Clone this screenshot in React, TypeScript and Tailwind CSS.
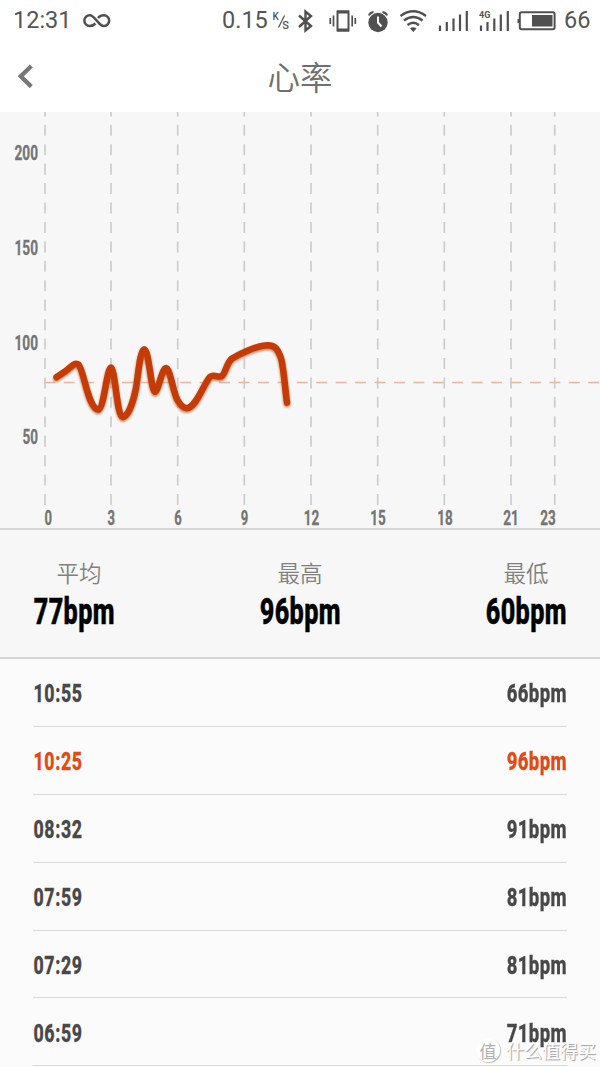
import React from "react";

const axisX = [45, 111, 177.7, 244.3, 311, 377.7, 444.3, 511, 554.7];

const xLabels = [
  { text: "0", x: 48.3, w: 7.5 },
  { text: "3", x: 111.2, w: 7.5 },
  { text: "6", x: 178, w: 7.5 },
  { text: "9", x: 244.5, w: 7.5 },
  { text: "12", x: 311.5, w: 15.5 },
  { text: "15", x: 378, w: 15.5 },
  { text: "18", x: 445, w: 15.5 },
  { text: "21", x: 511, w: 15.5 },
  { text: "23", x: 548, w: 15.5 },
];

const yLabels = [
  { text: "200", y: 159.5, w: 23.5 },
  { text: "150", y: 254.5, w: 23.5 },
  { text: "100", y: 349.5, w: 23.5 },
  { text: "50", y: 444.2, w: 15.5 },
];

const rows = [
  { time: "10:55", bpm: "66bpm", peak: false },
  { time: "10:25", bpm: "96bpm", peak: true },
  { time: "08:32", bpm: "91bpm", peak: false },
  { time: "07:59", bpm: "81bpm", peak: false },
  { time: "07:29", bpm: "81bpm", peak: false },
  { time: "06:59", bpm: "71bpm", peak: false },
];

function StatusBar() {
  return (
    <div className="flex h-[42px] shrink-0 items-center pl-[13px] font-['Roboto',sans-serif] text-[23.5px] font-normal text-[#555]">
      <span className="w-[70px]">12:31</span>
      <svg className="h-[42px] w-[28px]" viewBox="83 0 28 42" fill="none" stroke="#505050" strokeWidth="2.5">
        <path d="M95.500 23.500C93.500 25.500 91.500 26 89.700 26A5.400 5.400 0 0 1 89.700 15.200C95 15.200 98.500 26 103.800 26A5.400 5.400 0 0 0 103.800 15.200C101.500 15.200 99.500 16.200 98 18" />
      </svg>
      <span className="ml-[111px] w-[51px]">0.15</span>
      <svg className="h-[42px] w-[17px]" viewBox="273 0 17 42" fill="#555">
        <text x="272.500" y="19.500" fontSize="10" fontWeight="500">K</text>
        <path d="M284.500 15.500L278.500 27.500" stroke="#555" strokeWidth="1.300" />
        <text x="282.300" y="29" fontSize="11" fontWeight="500">S</text>
      </svg>
      <svg className="ml-[8px] h-[42px] w-[16px]" viewBox="298 0 16 42" fill="none" stroke="#505050" strokeWidth="2.4">
        <path d="M299 15.500L311 26L305.500 30.500V11.500L311 16L299 27" />
      </svg>
      <svg className="ml-[14px] h-[42px] w-[30px]" viewBox="328 0 30 42" fill="none" stroke="#505050" strokeWidth="1.700">
        <path d="M337.500 11.500H348.500V30.500H337.500Z" strokeWidth="2" />
        <path d="M337 12H349M337 30H349" strokeWidth="3" />
        <path d="M333.500 15.500V26.500M330.300 18V24M352.200 15.500V26.500M355.300 18V24" />
      </svg>
      <svg className="ml-[9px] h-[42px] w-[23px]" viewBox="367 0 23 42" fill="none">
        <circle cx="378" cy="22.500" r="9.700" fill="#505050" />
        <path d="M369 15.500Q370 12.500 373.500 12M387 15.500Q386 12.500 382.500 12" stroke="#505050" strokeWidth="2" />
        <path d="M378 16.500V22.500L381.500 26.500" stroke="#fff" strokeWidth="2" />
      </svg>
      <svg className="ml-[9px] h-[42px] w-[28px]" viewBox="399 0 28 42" fill="none" stroke="#505050" strokeWidth="2.300">
        <path d="M400.500 16Q413.300 6.500 426 16M404 20.500Q413.300 13.500 422.500 20.500M407.500 25Q413.300 20.500 419 25" />
        <path d="M410 28.500Q413.300 26 416.500 28.500L413.300 32Z" fill="#505050" stroke="none" />
      </svg>
      <svg className="ml-[11px] h-[42px] w-[32px]" viewBox="438 0 32 42" stroke="#505050" strokeWidth="2.200">
        <path d="M440 31V25.500M446.800 31V22M453.500 31V18.500M460 31V14.500M466.800 31V11" />
      </svg>
      <svg className="ml-[8px] h-[42px] w-[33px]" viewBox="478 0 33 42" stroke="#505050" strokeWidth="2.200">
        <path d="M481 31V25.500M487.500 31V22M494.300 31V18.500M500.800 31V14.500M507.800 31V11" />
        <text x="479" y="18" fontSize="9" fontWeight="700" fill="#505050" stroke="none">4G</text>
      </svg>
      <svg className="ml-[6px] h-[42px] w-[40px]" viewBox="517 0 40 42" fill="none">
        <rect x="519.800" y="12.300" width="34.800" height="17" rx="1.800" stroke="#505050" strokeWidth="2" />
        <path d="M532 15H552.500V26.500H532Z M517.500 19H519.500V23H517.500Z" fill="#505050" />
      </svg>
      <span className="ml-[7px]">66</span>
    </div>
  );
}

function NavBar() {
  return (
    <div className="grid h-[70px] shrink-0 grid-cols-[60px_1fr_60px] items-center">
      <svg className="h-[70px] w-[60px]" viewBox="0 42 60 70" fill="none" stroke="#777" strokeWidth="4.300">
        <path d="M31.300 66L20.800 76.300L31.300 86.600" />
      </svg>
      <h1 className="pb-[2px] text-center font-['Noto_Sans_CJK_SC',sans-serif] text-[32.5px] leading-[68px] font-[350] text-[#707070]">
        心率
      </h1>
    </div>
  );
}

const curve =
  "M56.500 377.200C61 374 64 372.500 67 370C70 367.500 75 361.500 78.500 364.500C84 370 88 409 98.500 409.500C104 408 107 367.500 111 367.500C115 367.500 117 417 122.500 417C128 416.500 133 403 136 388C138 377 140 349 144.300 349.300C149 349.500 151 391.500 155 391.800C158 392 162 368 166 368C170 368 173 392 177.500 400C180 404.500 183 408 187 408.200C196 407 202 388 209 378C213 372.500 217 378 221.500 376.300C225.500 374 226.500 362.500 232 358.500C239 354 257 345.300 267.500 345.300C276 345.300 278 350 281 358C284 369 285 389 287 402.500";

function Chart() {
  return (
    <svg
      className="block h-[416px] w-full shrink-0 overflow-visible bg-[#f7f7f7] font-['Roboto',sans-serif]"
      viewBox="0 112 600 416"
    >
      <defs>
        <filter id="glow" x="-10%" y="-20%" width="120%" height="140%">
          <feGaussianBlur stdDeviation="1.300" />
        </filter>
      </defs>
      {axisX.map((x) => (
        <line key={x} x1={x} x2={x} y1="505" y2="112" stroke="#cdcdcd" strokeWidth="1.700" strokeDasharray="11 8.430" />
      ))}
      <line x1="44.200" x2="600" y1="382.500" y2="382.500" stroke="#efb29d" strokeWidth="1.400" strokeDasharray="11 8.430" />
      <g fill="none" strokeLinecap="round" strokeLinejoin="round">
        <path d={curve} stroke="#a8602c" strokeOpacity="0.75" strokeWidth="6.800" filter="url(#glow)" transform="translate(0 1.500)" />
        <path d={curve} stroke="#c63b05" strokeWidth="6.500" />
      </g>
      <g fill="#747474" stroke="#747474" strokeWidth="0.300" fontSize="20" fontWeight="700">
        {yLabels.map((l) => (
          <text key={l.text} x={38 - l.w} y={l.y} textLength={l.w} lengthAdjust="spacingAndGlyphs">
            {l.text}
          </text>
        ))}
        {xLabels.map((l) => (
          <text key={l.text} x={l.x - l.w / 2} y="525" textLength={l.w} lengthAdjust="spacingAndGlyphs">
            {l.text}
          </text>
        ))}
      </g>
    </svg>
  );
}

const din = "inline-block whitespace-nowrap font-['Roboto',sans-serif] font-extrabold";

function Stat({ label, value, labelClass }: { label: string; value: string; labelClass: string }) {
  return (
    <div className="flex w-[82px] flex-col items-center">
      <span
        className={`mb-[2px] font-['Noto_Sans_CJK_SC',sans-serif] text-[22.5px] leading-[34px] font-[350] text-[#808080] ${labelClass}`}
      >
        {label}
      </span>
      <span
        className={`${din} translate-x-[0.5px] scale-x-[0.7] text-[36px] leading-[42px] tracking-[0.5px] text-black [-webkit-text-stroke:0.5px]`}
      >
        {value}
      </span>
    </div>
  );
}

export default function App() {
  return (
    <div className="relative flex h-[1067px] w-[600px] flex-col overflow-hidden bg-white">
      <StatusBar />
      <NavBar />
      <Chart />
      <section className="flex h-[131px] shrink-0 justify-between border-t-2 border-b-2 border-[#d6d6d6] bg-[#f7f7f7] px-[33px] pt-[25px]">
        <Stat label="平均" value="77bpm" labelClass="pl-[10px]" />
        <Stat label="最高" value="96bpm" labelClass="" />
        <Stat label="最低" value="60bpm" labelClass="" />
      </section>
      <ul className="flex flex-1 flex-col bg-[#fbfbfb] px-[33px]">
        {rows.map((r) => (
          <li
            key={r.time}
            className={`flex h-[67.9px] shrink-0 items-center justify-between border-b border-[#dadada] pt-[1px] text-[26.5px] [-webkit-text-stroke:0.3px] ${
              r.peak ? "text-[#e24a12]" : "text-[#484848]"
            }`}
          >
            <span className={`${din} origin-left translate-x-[0.5px] scale-x-[0.67] tracking-[0.9px]`}>{r.time}</span>
            <span className={`${din} origin-right scale-x-[0.7] tracking-[0.5px]`}>{r.bpm}</span>
          </li>
        ))}
      </ul>
      <div className="absolute right-[4px] bottom-[3px] flex items-center gap-[6px] font-['Noto_Sans_CJK_SC',sans-serif] text-white">
        <span className="flex size-[24px] items-center justify-center rounded-full bg-white/80 text-[17px] leading-none text-[#b0b0b0] shadow-[1px_1px_1px_#bbb]">
          值
        </span>
        <span className="text-[18px] leading-[28px] [text-shadow:1px_1px_1px_#999]">什么值得买</span>
      </div>
    </div>
  );
}
